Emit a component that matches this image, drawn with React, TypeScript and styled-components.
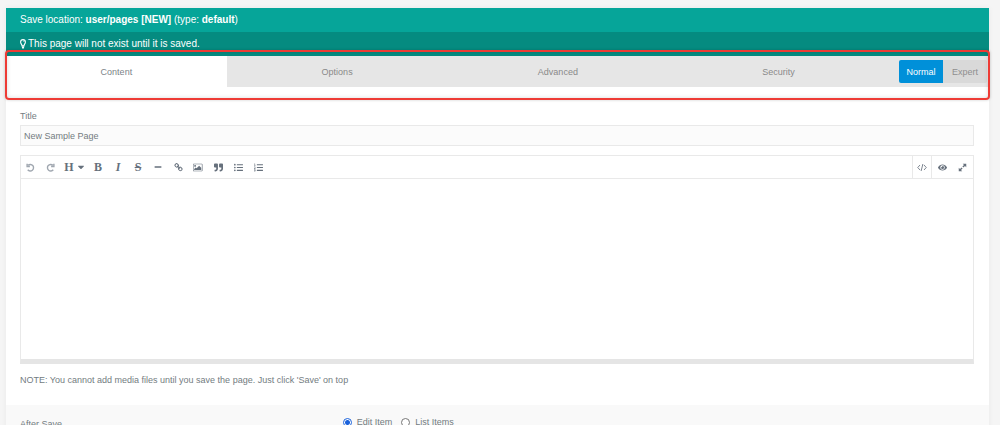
import React, { useState } from 'react';
import styled, { createGlobalStyle } from 'styled-components';
import {
  FaCaretDown,
  FaEye,
  FaListOl,
  FaListUl,
  FaMinus,
  FaQuoteRight,
} from 'react-icons/fa';

const GlobalStyle = createGlobalStyle`
  * { box-sizing: border-box; }
  body {
    margin: 0;
    background: #f5f5f5;
    color: #737c81;
    font-family: "Liberation Sans", Arial, sans-serif;
    font-size: 9px;
    line-height: 12px;
    overflow: hidden;
  }
  button, input, textarea { font: inherit; color: inherit; }
`;

const Panel = styled.main`
  margin: 8px 11px 0 6px;
  background: #fff;
  box-shadow: 0 0 6px rgba(0, 0, 0, 0.05);
`;

const Banner = styled.div<{ $dark?: boolean }>`
  display: flex;
  align-items: center;
  gap: 2px;
  height: 24px;
  padding: 0 14px;
  background: ${(p) => (p.$dark ? '#058b80' : '#06a599')};
  color: #fff;
  font-size: 10px;
  white-space: pre;
`;

const TabBar = styled.div`
  position: relative;
  display: flex;
  height: 31px;
  background: #e6e6e6;
`;

const TabList = styled.div`
  display: flex;
  flex: 1;
`;

const Tab = styled.button<{ $active: boolean }>`
  flex: 1;
  border: 0;
  padding: 0;
  background: ${(p) => (p.$active ? '#fff' : 'transparent')};
  color: ${(p) => (p.$active ? '#7c8489' : '#898989')};
`;

const ModeSwitch = styled.div`
  display: flex;
  align-items: center;
  padding: 0 2px 0 10px;
`;

const ModeButton = styled.button<{ $active: boolean }>`
  height: 23px;
  width: 44px;
  padding: 0;
  border: 0;
  border-radius: ${(p) => (p.$active ? '2px 0 0 2px' : '0 2px 2px 0')};
  background: ${(p) => (p.$active ? '#0090d9' : '#d9d9d9')};
  color: ${(p) => (p.$active ? '#fff' : '#8f8f8f')};
`;

const Highlight = styled.div`
  position: absolute;
  inset: -6px -1px -13px;
  border: 2px solid #ee3b35;
  border-radius: 4px;
  box-shadow: 0 0 3px rgba(0, 0, 0, 0.2), inset 0 0 4px rgba(0, 0, 0, 0.15);
  pointer-events: none;
`;

const Fields = styled.div`
  display: flex;
  flex-direction: column;
  padding: 23px 15px 19px 14px;
`;

const Label = styled.label`
  margin-bottom: 3px;
`;

const TextInput = styled.input`
  width: 100%;
  height: 21px;
  padding: 0 3px;
  border: 1px solid #e9e9e9;
  background: #fbfbfb;
  outline: 0;
`;

const Editor = styled.div`
  margin: 9px 0 10px;
  border: 1px solid #e9e9e9;
  border-bottom: 5px solid #e5e5e5;
`;

const Toolbar = styled.div`
  display: flex;
  justify-content: space-between;
  height: 23px;
  padding-right: 1px;
  border-bottom: 1px solid #e9e9e9;
`;

const ToolGroup = styled.div`
  display: flex;
  margin-left: -1px;
`;

const Tool = styled.button<{ $wide?: boolean; $faded?: boolean; $boxed?: boolean }>`
  display: flex;
  align-items: center;
  justify-content: center;
  gap: 2px;
  width: ${(p) => (p.$wide ? 28 : 20)}px;
  padding: 0 0 0 ${(p) => (p.$wide ? 2 : 0)}px;
  border: solid #e9e9e9;
  border-width: ${(p) => (p.$boxed ? '0 1px' : '0')};
  background: none;
  color: ${(p) => (p.$faded ? '#a0a7b0' : '#66707c')};
`;

const Letter = styled.span<{ $italic?: boolean; $strike?: boolean }>`
  font: ${(p) => (p.$italic ? 'italic' : 'normal')} bold 12px/12px "Liberation Serif", serif;
  text-decoration: ${(p) => (p.$strike ? 'line-through' : 'none')};
`;

const Writing = styled.textarea`
  display: block;
  width: 100%;
  height: 180px;
  padding: 6px;
  border: 0;
  outline: 0;
  resize: none;
`;

const Note = styled.p`
  margin: 0;
`;

const SaveRow = styled.fieldset`
  display: flex;
  align-items: flex-start;
  margin: 0;
  padding: 11px 14px 20px;
  border: 0;
  background: #f9f9f9;
`;

const SaveLabel = styled.span`
  flex: 0 0 calc(34% - 2px);
  padding-top: 2px;
`;

const Choice = styled.label`
  display: flex;
  align-items: center;
  gap: 5px;
  margin-right: 9px;
`;

const Radio = styled.input`
  appearance: none;
  width: 9px;
  height: 9px;
  margin: 0;
  border: 1px solid #767676;
  border-radius: 50%;
  background: #fff;
  &:checked {
    border-color: #1a62dc;
    background: radial-gradient(circle, #1a62dc 2px, #fff 3px);
  }
`;

const Turn = ({ forward }: { forward?: boolean }) => (
  <svg width="9" height="9" viewBox="0 0 18 18" fill="none" stroke="currentColor" strokeWidth="2.8">
    {forward ? (
      <path d="M14.5 13.5A6.5 6.5 0 1 1 13.8 4.6M15.8 1.5V7H10.2" />
    ) : (
      <path d="M3.5 13.5A6.5 6.5 0 1 0 4.2 4.6M2.2 1.5V7H7.8" />
    )}
  </svg>
);

const Bulb = () => (
  <svg width="6" height="10" viewBox="0 0 12 20" fill="none" stroke="currentColor" strokeWidth="2.2">
    <path d="M4 13.5C4 10.8 1.2 9.5 1.2 6A4.8 4.8 0 0 1 10.8 6C10.8 9.5 8 10.8 8 13.5Z" />
    <path d="M6 3.5Q8.3 3.8 8.4 6" strokeWidth="1.2" />
    <path d="M3.5 15.5H8.5M4 17.8H8" />
  </svg>
);

const Chain = () => (
  <svg width="9" height="9" viewBox="0 0 1792 1792" fill="currentColor">
    <path d="M1520 1216q0-40-28-68l-208-208q-28-28-68-28-42 0-72 32 3 3 19 18.5t21.5 21.5 15 19 13 25.5 3.5 27.5q0 40-28 68t-68 28q-15 0-27.5-3.5t-25.5-13-19-15-21.5-21.5-18.5-19q-33 31-33 73 0 40 28 68l206 207q27 27 68 27 40 0 68-26l147-146q28-28 28-67zm-703-705q0-40-28-68l-206-207q-28-28-68-28-39 0-68 27l-147 146q-28 28-28 67 0 40 28 68l208 208q27 27 68 27 42 0 72-31-3-3-19-18.5t-21.5-21.5-15-19-13-25.5-3.5-27.5q0-40 28-68t68-28q15 0 27.5 3.5t25.5 13 19 15 21.5 21.5 18.5 19q33-31 33-73zm895 705q0 120-85 203l-147 146q-83 83-203 83-121 0-204-85l-206-207q-83-83-83-203 0-123 88-209l-88-88q-86 88-208 88-120 0-204-84l-208-208q-84-84-84-204t85-203l147-146q83-83 203-83 121 0 204 85l206 207q83 83 83 203 0 123-88 209l88 88q86-88 208-88 120 0 204 84l208 208q84 84 84 204z" />
  </svg>
);

const Picture = () => (
  <svg width="10" height="9" viewBox="0 0 1920 1792" fill="currentColor">
    <path d="M576 576q0 80-56 136t-136 56-136-56-56-136 56-136 136-56 136 56 56 136zm1024 384v448h-1408v-192l320-320 160 160 512-512zm96-704h-1600q-13 0-22.5 9.5t-9.5 22.5v1216q0 13 9.5 22.5t22.5 9.5h1600q13 0 22.5-9.5t9.5-22.5v-1216q0-13-9.5-22.5t-22.5-9.5zm160 32v1216q0 66-47 113t-113 47h-1600q-66 0-113-47t-47-113v-1216q0-66 47-113t113-47h1600q66 0 113 47t47 113z" />
  </svg>
);

const Code = () => (
  <svg width="10" height="9" viewBox="0 0 20 18" fill="none" stroke="currentColor" strokeWidth="1.7">
    <path d="M6 4L1.5 9L6 14M14 4L18.5 9L14 14M11.8 2L8.2 16" />
  </svg>
);

const Expand = () => (
  <svg width="9" height="9" viewBox="0 0 18 18" fill="currentColor">
    <path d="M9.5 1.5H16.5V8.5L14 6L10.8 9.2L8.8 7.2L12 4ZM8.5 16.5H1.5V9.5L4 12L7.2 8.8L9.2 10.8L6 14Z" />
  </svg>
);

const tabs = ['Content', 'Options', 'Advanced', 'Security'];
const modes = ['Normal', 'Expert'];

const tools = [
  { name: 'Undo', icon: <Turn />, faded: true },
  { name: 'Redo', icon: <Turn forward />, faded: true },
  { name: 'Heading', icon: <><Letter>H</Letter><FaCaretDown size={10} /></>, wide: true },
  { name: 'Bold', icon: <Letter>B</Letter> },
  { name: 'Italic', icon: <Letter $italic>I</Letter> },
  { name: 'Strikethrough', icon: <Letter $strike>S</Letter> },
  { name: 'Rule', icon: <FaMinus size={8} /> },
  { name: 'Link', icon: <Chain /> },
  { name: 'Image', icon: <Picture /> },
  { name: 'Quote', icon: <FaQuoteRight size={9} /> },
  { name: 'Bulleted list', icon: <FaListUl size={9} /> },
  { name: 'Numbered list', icon: <FaListOl size={9} /> },
];

export default function App() {
  const [tab, setTab] = useState('Content');
  const [mode, setMode] = useState('Normal');

  return (
    <>
      <GlobalStyle />
      <Panel>
        <Banner>
          <span>
            Save location: <b>user/pages [NEW]</b> (type: <b>default</b>)
          </span>
        </Banner>
        <Banner $dark>
          <Bulb />
          <span>This page will not exist until it is saved.</span>
        </Banner>
        <TabBar>
          <TabList role="tablist">
            {tabs.map((t) => (
              <Tab key={t} role="tab" aria-selected={t === tab} $active={t === tab} onClick={() => setTab(t)}>
                {t}
              </Tab>
            ))}
          </TabList>
          <ModeSwitch>
            {modes.map((m) => (
              <ModeButton key={m} $active={m === mode} onClick={() => setMode(m)}>
                {m}
              </ModeButton>
            ))}
          </ModeSwitch>
          <Highlight />
        </TabBar>
        <Fields>
          <Label htmlFor="title">Title</Label>
          <TextInput id="title" defaultValue="New Sample Page" />
          <Editor>
            <Toolbar>
              <ToolGroup>
                {tools.map((t) => (
                  <Tool key={t.name} aria-label={t.name} $wide={t.wide} $faded={t.faded}>
                    {t.icon}
                  </Tool>
                ))}
              </ToolGroup>
              <ToolGroup>
                <Tool aria-label="Code" $boxed><Code /></Tool>
                <Tool aria-label="Preview"><FaEye size={9} /></Tool>
                <Tool aria-label="Fullscreen"><Expand /></Tool>
              </ToolGroup>
            </Toolbar>
            <Writing aria-label="Page content" />
          </Editor>
          <Note>NOTE: You cannot add media files until you save the page. Just click 'Save' on top</Note>
        </Fields>
        <SaveRow aria-labelledby="after-save">
          <SaveLabel id="after-save">After Save</SaveLabel>
          <Choice>
            <Radio type="radio" name="after-save" defaultChecked />
            Edit Item
          </Choice>
          <Choice>
            <Radio type="radio" name="after-save" />
            List Items
          </Choice>
        </SaveRow>
      </Panel>
    </>
  );
}
